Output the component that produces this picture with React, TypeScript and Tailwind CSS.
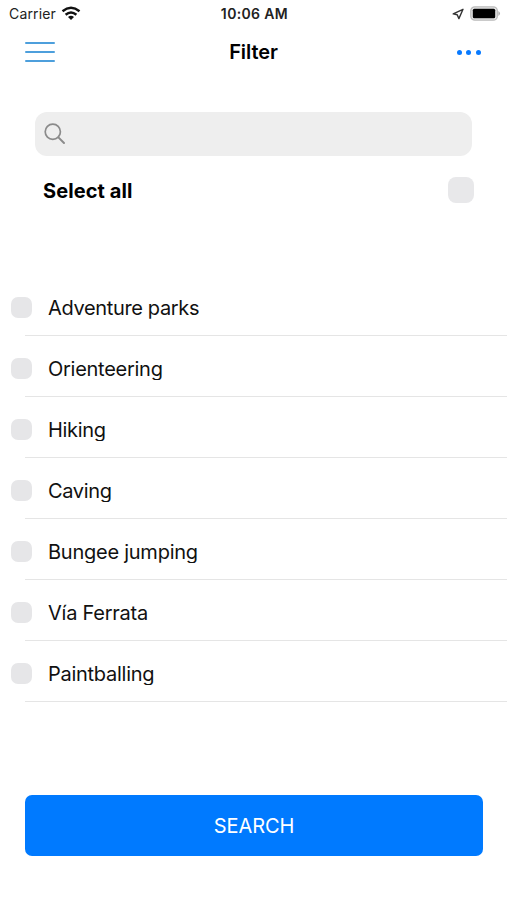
const activities = [
  { name: 'Adventure parks', tracking: 'tracking-[-0.35px]' },
  { name: 'Orienteering', tracking: 'tracking-[-0.27px]' },
  { name: 'Hiking', tracking: 'tracking-[-0.3px]' },
  { name: 'Caving', tracking: 'tracking-[-0.35px]' },
  { name: 'Bungee jumping', tracking: 'tracking-[-0.25px]' },
  { name: 'Vía Ferrata', tracking: 'tracking-[-0.25px]' },
  { name: 'Paintballing', tracking: 'tracking-[-0.27px]' },
];

function WifiIcon() {
  return (
    <svg width="20" height="16" viewBox="0 0 20 16" fill="none" stroke="#111" strokeWidth="2.5">
      <path d="M1.5 5.2Q10-1.6 18.5 5.2" />
      <path d="M4.6 8.7Q10 4.3 15.4 8.7" />
      <path d="M7 11Q10 8.6 13 11L10 14Z" fill="#111" stroke="none" />
    </svg>
  );
}

function StatusBar() {
  return (
    <div className="grid h-7 grid-cols-3 items-center pl-[8px] pr-[6px] text-[14px] leading-none text-[#222]">
      <div className="flex items-center gap-[5px] pl-px">
        <span className="tracking-[0.15px]">Carrier</span>
        <WifiIcon />
      </div>
      <span className="text-center font-semibold tracking-[0.35px]">10:06 AM</span>
      <div className="flex items-center justify-end gap-[6px]">
        <svg width="12" height="12" viewBox="0 0 12 12" fill="none" stroke="#333" strokeWidth="1.4" strokeLinejoin="round">
          <path d="M11 1.3L1.2 5.9L5.2 6.7L6.9 10.6Z" />
        </svg>
        <svg className="-mt-px" width="31" height="15" viewBox="0 0 31 15">
          <rect x="0.8" y="0.8" width="26.5" height="13.4" rx="4" fill="#e6e6e6" stroke="#bbb" strokeWidth="1.3" />
          <rect x="2.8" y="2.8" width="22.4" height="9.4" rx="1.5" fill="#000" />
          <path d="M28.4 5Q31.6 7.5 28.4 10Z" fill="#aaa" />
        </svg>
      </div>
    </div>
  );
}

export default function App() {
  return (
    <main className="flex h-[900px] w-[507px] flex-col overflow-hidden bg-white font-['Inter','Liberation_Sans',sans-serif] text-black">
      <StatusBar />
      <header className="grid h-12 grid-cols-3 items-center px-[25px]">
        <button aria-label="Menu" className="flex w-[30px] flex-col gap-[7px]">
          <span className="h-[2px] w-full rounded-full bg-[#4d9fdc]" />
          <span className="h-[2px] w-full rounded-full bg-[#4d9fdc]" />
          <span className="h-[2px] w-full rounded-full bg-[#4d9fdc]" />
        </button>
        <h1 className="text-center text-[20px] font-semibold leading-6 tracking-[-0.1px]">Filter</h1>
        <button aria-label="More" className="flex justify-end gap-[4.5px] pr-px">
          <span className="size-[5px] rounded-full bg-[#087aff]" />
          <span className="size-[5px] rounded-full bg-[#087aff]" />
          <span className="size-[5px] rounded-full bg-[#087aff]" />
        </button>
      </header>
      <section className="mt-9 px-[35px]">
        <div className="flex h-11 items-center rounded-[12px] bg-[#eeeeee] pl-[9px]">
          <svg width="22" height="22" viewBox="0 0 22 22" fill="none" stroke="#8b8b8b" strokeWidth="1.7" strokeLinecap="round">
            <circle cx="8.8" cy="8.8" r="7.6" />
            <path d="M14.4 14.4L20 20" strokeWidth="2" />
          </svg>
        </div>
        <div className="mt-[21px] flex h-[26px] items-center justify-between pl-2">
          <span className="pt-px text-[20px] font-bold tracking-[0.1px]">Select all</span>
          <span className="-mr-[2px] size-[26px] rounded-[8px] bg-[#e8e8ea]" />
        </div>
      </section>
      <ul className="mt-[72px]">
        {activities.map((activity) => (
          <li key={activity.name} className="h-[61px]">
            <div className="flex h-[60px] items-center gap-4 pl-[11px] pt-[4px]">
              <span className="size-[21px] rounded-[7px] bg-[#e6e6e8]" />
              <span className={`h-[23px] overflow-hidden text-[20px] leading-6 text-[#111] ${activity.tracking}`}>{activity.name}</span>
            </div>
            <div className="ml-[25px] h-px bg-[#e5e5e5]" />
          </li>
        ))}
      </ul>
      <button className="ml-[25px] mt-[93px] h-[61px] w-[458px] rounded-[7px] bg-[#007aff] text-[20px] tracking-[-0.1px] text-white">SEARCH</button>
    </main>
  );
}
